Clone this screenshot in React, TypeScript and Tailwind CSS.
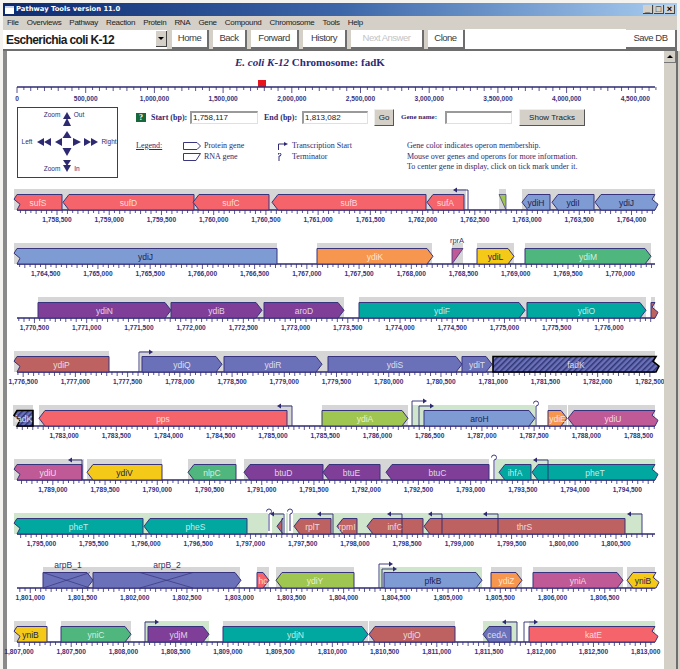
import type { ReactNode } from 'react';

type Side = 'l' | 'r';

interface Gene {
  name: string;
  x1: number;
  x2: number;
  color: string;
  /** Arrow tip side; omitted for a flat-ended fragment. */
  dir?: Side;
  /** The gene runs on past the end of the line. */
  notch?: Side;
  dark?: boolean;
  /** Label sits above the gene rather than inside it. */
  above?: boolean;
  cross?: [number, number];
  hatch?: boolean;
}

interface Promoter {
  x: number;
  to: number;
  rise?: number;
}

interface Track {
  bands: [number, number, string][];
  genes: Gene[];
  promoters?: Promoter[];
  terminators?: { x: number; from?: number }[];
}

const RED = '#f4646a';
const BLUE = '#7f9bd3';
const PURPLE = '#7f3f98';
const TEAL = '#00a8a0';
const ORANGE = '#f6964f';
const YELLOW = '#f5c917';
const GREEN = '#4fb67d';
const LIME = '#9fc650';
const PINK = '#bf5a96';
const BROWN = '#bd6161';
const PERI = '#6b71b8';

const NAVY = '#2e2a72';
const G = '#d6d6d6'; // gray operon band
const C = '#cfe6cd'; // green operon band

const BASE = 33;
const TOP = 17.5;
const LINE_BP = 6108;
const START_BP = 1758117;
const PX_PER_BP = 0.10445;

const TRACKS: Track[] = [
  {
    bands: [[14, 466, G], [499, 506, G], [522, 655, G]],
    genes: [
      { name: 'sufS', x1: 14, x2: 62, color: RED, notch: 'l' },
      { name: 'sufD', x1: 63, x2: 194, color: RED, dir: 'l' },
      { name: 'sufC', x1: 193, x2: 269, color: RED, dir: 'l' },
      { name: 'sufB', x1: 272, x2: 426, color: RED, dir: 'l' },
      { name: 'sufA', x1: 427, x2: 464, color: RED, dir: 'l' },
      { name: 'ydiH', x1: 522, x2: 550, color: BLUE, dir: 'l', dark: true },
      { name: 'ydiI', x1: 552, x2: 594, color: BLUE, dir: 'l', dark: true },
      { name: 'ydiJ', x1: 595, x2: 658, color: BLUE, dir: 'l', notch: 'r', dark: true },
    ],
    promoters: [{ x: 468, to: 453 }],
  },
  {
    bands: [[14, 277, G], [317, 432, G], [452, 463, G], [477, 514, G], [525, 651, G]],
    genes: [
      { name: 'ydiJ', x1: 14, x2: 277, color: BLUE, notch: 'l', dark: true },
      { name: 'ydiK', x1: 317, x2: 433, color: ORANGE, dir: 'r' },
      { name: 'ydiL', x1: 477, x2: 514, color: YELLOW, dir: 'r', dark: true },
      { name: 'ydiM', x1: 525, x2: 651, color: GREEN, dir: 'r' },
    ],
  },
  {
    bands: [[38, 344, G], [359, 646, G], [651, 655, G]],
    genes: [
      { name: 'ydiN', x1: 38, x2: 171, color: PURPLE, dir: 'r' },
      { name: 'ydiB', x1: 171, x2: 262, color: PURPLE, dir: 'r' },
      { name: 'aroD', x1: 264, x2: 344, color: PURPLE, dir: 'r' },
      { name: 'ydiF', x1: 359, x2: 525, color: TEAL, dir: 'r' },
      { name: 'ydiO', x1: 527, x2: 646, color: TEAL, dir: 'r' },
      { name: '', x1: 651, x2: 658, color: BROWN, notch: 'r' },
    ],
  },
  {
    bands: [[14, 109, G], [140, 655, G]],
    genes: [
      { name: 'ydiP', x1: 14, x2: 109, color: BROWN, notch: 'l' },
      { name: 'ydiQ', x1: 142, x2: 222, color: PERI, dir: 'r' },
      { name: 'ydiR', x1: 224, x2: 322, color: PERI, dir: 'r' },
      { name: 'ydiS', x1: 328, x2: 462, color: PERI, dir: 'r' },
      { name: 'ydiT', x1: 462, x2: 492, color: PERI, dir: 'r' },
      { name: 'fadK', x1: 493, x2: 659, color: PERI, notch: 'r', hatch: true },
    ],
    promoters: [{ x: 139, to: 153 }],
  },
  {
    bands: [[13, 33, G], [39, 292, G], [322, 408, G], [412, 535, C], [548, 567, G], [568, 655, G]],
    genes: [
      { name: 'fadK', x1: 14, x2: 33, color: PERI, notch: 'l', hatch: true },
      { name: 'pps', x1: 39, x2: 287, color: RED, dir: 'l' },
      { name: 'ydiA', x1: 322, x2: 408, color: LIME, dir: 'r' },
      { name: 'aroH', x1: 424, x2: 535, color: BLUE, dir: 'r', dark: true },
      { name: 'ydiE', x1: 548, x2: 567, color: ORANGE, dir: 'r' },
      { name: 'ydiU', x1: 568, x2: 658, color: PINK, dir: 'l', notch: 'r' },
    ],
    promoters: [{ x: 292, to: 277 }, { x: 412, to: 427, rise: 25 }, { x: 419, to: 434 }],
    terminators: [{ x: 536 }],
  },
  {
    bands: [[14, 84, G], [87, 162, G], [188, 236, G], [244, 489, G], [495, 655, C]],
    genes: [
      { name: 'ydiU', x1: 14, x2: 82, color: PINK, notch: 'l' },
      { name: 'ydiV', x1: 87, x2: 162, color: YELLOW, dir: 'l', dark: true },
      { name: 'nlpC', x1: 188, x2: 236, color: GREEN, dir: 'l' },
      { name: 'btuD', x1: 244, x2: 323, color: PURPLE, dir: 'l' },
      { name: 'btuE', x1: 323, x2: 380, color: PURPLE, dir: 'l' },
      { name: 'btuC', x1: 386, x2: 489, color: PURPLE, dir: 'l' },
      { name: 'ihfA', x1: 499, x2: 531, color: TEAL, dir: 'l' },
      { name: 'pheT', x1: 532, x2: 658, color: TEAL, dir: 'l', notch: 'r' },
    ],
    promoters: [{ x: 82, to: 68 }, { x: 548, to: 533 }],
    terminators: [{ x: 494 }],
  },
  {
    bands: [[14, 268, C], [272, 283, C], [286, 288, C], [293, 642, C]],
    genes: [
      { name: 'pheT', x1: 14, x2: 143, color: TEAL, notch: 'l' },
      { name: 'pheS', x1: 144, x2: 247, color: TEAL, dir: 'l' },
      { name: '', x1: 277, x2: 282, color: BROWN, dir: 'l' },
      { name: 'rplT', x1: 294, x2: 331, color: BROWN, dir: 'l' },
      { name: 'rpmI', x1: 337, x2: 357, color: BROWN, dir: 'l' },
      { name: 'infC', x1: 367, x2: 423, color: BROWN, dir: 'l' },
      { name: 'thrS', x1: 424, x2: 625, color: BROWN, dir: 'l' },
    ],
    promoters: [
      { x: 284, to: 270 }, { x: 333, to: 317 }, { x: 402, to: 387 },
      { x: 442, to: 428 }, { x: 498, to: 483 }, { x: 642, to: 627 },
    ],
    terminators: [{ x: 269, from: 3 }, { x: 290, from: 3 }],
  },
  {
    bands: [[43, 240, G], [257, 269, G], [276, 354, G], [380, 482, C], [491, 522, G], [533, 623, G], [627, 655, G]],
    genes: [
      { name: 'arpB_1', x1: 43, x2: 93, color: PERI, dir: 'r', above: true, cross: [43, 90] },
      { name: 'arpB_2', x1: 93, x2: 241, color: PERI, dir: 'r', above: true, cross: [140, 193] },
      { name: 'hc', x1: 257, x2: 269, color: RED, dir: 'r' },
      { name: 'ydiY', x1: 276, x2: 354, color: LIME, dir: 'l' },
      { name: 'pfkB', x1: 384, x2: 482, color: BLUE, dir: 'r', dark: true },
      { name: 'ydiZ', x1: 491, x2: 522, color: ORANGE, dir: 'r' },
      { name: 'yniA', x1: 533, x2: 623, color: PINK, dir: 'r' },
      { name: 'yniB', x1: 627, x2: 659, color: YELLOW, dir: 'l', notch: 'r', dark: true },
    ],
    promoters: [{ x: 379, to: 393, rise: 24 }, { x: 382, to: 397, rise: 19 }],
  },
  {
    bands: [[14, 46, G], [61, 131, G], [145, 209, C], [223, 368, G], [369, 455, G], [483, 517, C], [529, 655, C]],
    genes: [
      { name: 'yniB', x1: 14, x2: 47, color: YELLOW, notch: 'l', dark: true },
      { name: 'yniC', x1: 61, x2: 131, color: GREEN, dir: 'r' },
      { name: 'ydjM', x1: 148, x2: 209, color: PURPLE, dir: 'r' },
      { name: 'ydjN', x1: 223, x2: 368, color: TEAL, dir: 'r' },
      { name: 'ydjO', x1: 369, x2: 455, color: BROWN, dir: 'l' },
      { name: 'cedA', x1: 483, x2: 511, color: PERI, dir: 'l' },
      { name: 'katE', x1: 529, x2: 658, color: RED, dir: 'r', notch: 'r' },
    ],
    promoters: [{ x: 145, to: 159 }, { x: 517, to: 502 }, { x: 524, to: 538 }],
  },
];

const MENU = ['File', 'Overviews', 'Pathway', 'Reaction', 'Protein', 'RNA', 'Gene', 'Compound', 'Chromosome', 'Tools', 'Help'];

const NOTES = [
  'Gene color indicates operon membership.',
  'Mouse over genes and operons for more information.',
  'To center gene in display, click on tick mark under it.',
];

function genePoints(g: Gene): string {
  const pts: [number, number][] = [];
  const mid = (TOP + BASE) / 2;
  if (g.notch === 'l') {
    pts.push([g.x1 + 3, BASE], [g.x1 + 6, mid + 2], [g.x1, mid - 3], [g.x1 + 3, TOP]);
  } else if (g.dir === 'l') {
    pts.push([g.x1 + 6, BASE], [g.x1, mid], [g.x1 + 6, TOP]);
  } else {
    pts.push([g.x1, BASE], [g.x1, TOP]);
  }
  if (g.notch === 'r') {
    pts.push([g.x2 - 3, TOP], [g.x2 - 6, mid - 3], [g.x2, mid + 2], [g.x2 - 3, BASE]);
  } else if (g.dir === 'r') {
    pts.push([g.x2 - 6, TOP], [g.x2, mid], [g.x2 - 6, BASE]);
  } else {
    pts.push([g.x2, TOP], [g.x2, BASE]);
  }
  return pts.map((p) => p.join(',')).join(' ');
}

function Axis({ startBp }: { startBp: number }) {
  const ticks: ReactNode[] = [];
  const first = Math.ceil(startBp / 50) * 50;
  for (let bp = first; bp < startBp + LINE_BP; bp += 50) {
    const x = 17 + (bp - startBp) * PX_PER_BP;
    const major = bp % 500 === 0;
    ticks.push(
      <line key={bp} x1={x} x2={x} y1={BASE} y2={BASE + (major ? 5 : bp % 100 === 0 ? 4 : 3)} stroke={NAVY} strokeWidth={0.8} />
    );
    if (major) {
      ticks.push(
        <text key={`l${bp}`} x={x} y={BASE + 12} textAnchor="middle" fontSize={6.6} fontWeight={700} fill="#36327c" fontFamily="'Liberation Sans', sans-serif">
          {bp.toLocaleString('en-US')}
        </text>
      );
    }
  }
  return (
    <>
      <line x1={17} x2={655} y1={BASE} y2={BASE} stroke={NAVY} strokeWidth={1.6} />
      {ticks}
    </>
  );
}

function GeneShape({ gene }: { gene: Gene }) {
  const labelColor = gene.dark ? '#1d2350' : '#ffffff';
  const cx = (gene.x1 + gene.x2) / 2;
  return (
    <g>
      <polygon
        points={genePoints(gene)}
        fill={gene.hatch ? 'url(#hatch)' : gene.color}
        stroke={gene.hatch ? '#000' : '#37337c'}
        strokeWidth={gene.hatch ? 1.6 : 1}
      />
      {gene.cross && (
        <g stroke="#37337c" strokeWidth={0.7}>
          <line x1={gene.cross[0]} x2={gene.cross[1]} y1={TOP} y2={BASE} />
          <line x1={gene.cross[0]} x2={gene.cross[1]} y1={BASE} y2={TOP} />
        </g>
      )}
      {gene.name && (
        <text
          x={cx}
          y={gene.above ? TOP - 5 : TOP + 11}
          textAnchor="middle"
          fontSize={8.5}
          fill={gene.above ? '#33336a' : labelColor}
          fillOpacity={gene.dark || gene.above ? 1 : 0.78}
          fontFamily="'Liberation Sans', sans-serif"
        >
          {gene.name}
        </text>
      )}
    </g>
  );
}

function TrackRow({ track, index }: { track: Track; index: number }) {
  return (
    <svg viewBox="7 0 657 54" width={657} height={54} className="block overflow-visible">
      <defs>
        <pattern id="hatch" width={4} height={4} patternUnits="userSpaceOnUse" patternTransform="rotate(45)">
          <rect width={4} height={4} fill="#6b71b8" />
          <rect width={1.5} height={4} fill="#2f3472" />
        </pattern>
      </defs>
      {track.bands.map(([a, b, c]) => (
        <rect key={`${a}-${b}`} x={a} y={12} width={b - a} height={BASE - 12} fill={c} />
      ))}
      <Axis startBp={START_BP + LINE_BP * index} />
      {track.genes.map((g) => (
        <GeneShape key={`${g.name}-${g.x1}`} gene={g} />
      ))}
      {/* rprA is an RNA gene, so it gets the slanted shape instead of an arrow */}
      {index === 1 && (
        <g>
          <polygon points="452,17.5 463,17.5 452,33" fill={PINK} stroke="#37337c" strokeWidth={0.8} />
          <text x={457} y={12} textAnchor="middle" fontSize={7.5} fill="#33336a" fontFamily="'Liberation Sans', sans-serif">rprA</text>
        </g>
      )}
      {index === 0 && <polygon points="499,17.5 506,17.5 506,33" fill={LIME} stroke="#37337c" strokeWidth={0.7} />}
      {track.promoters?.map((p) => {
        const y = BASE - (p.rise ?? 20);
        const d = p.to > p.x ? -4 : 4;
        return (
          <g key={p.x}>
            <path d={`M${p.x} ${BASE}V${y}H${p.to + d}`} fill="none" stroke={NAVY} strokeWidth={0.9} />
            <polygon points={`${p.to},${y} ${p.to + d},${y - 2.5} ${p.to + d},${y + 2.5}`} fill={NAVY} />
          </g>
        );
      })}
      {track.terminators?.map((t) => (
        <path
          key={t.x}
          d={`M${t.x} ${BASE - (t.from ?? 0)}V${BASE - 20}a2.5 2.5 0 1 0 -2.5 -2.5`}
          fill="none"
          stroke="#3f3c86"
          strokeWidth={1}
        />
      ))}
    </svg>
  );
}

function OverviewRuler() {
  const ticks: ReactNode[] = [];
  for (let i = 0; i <= 93; i++) {
    const x = 17 + i * 6.87;
    const major = i % 10 === 0;
    ticks.push(<line key={i} x1={x} x2={x} y1={88} y2={major ? 94 : i % 2 === 0 ? 92 : 91} stroke={NAVY} strokeWidth={0.8} />);
    if (major) {
      ticks.push(
        <text key={`l${i}`} x={x} y={102} textAnchor="middle" fontSize={6.6} fontWeight={700} fill="#36327c" fontFamily="'Liberation Sans', sans-serif">
          {(i * 50000).toLocaleString('en-US')}
        </text>
      );
    }
  }
  return (
    <svg viewBox="7 76 657 30" width={657} height={30} className="block">
      <rect x={258} y={81} width={8} height={7} fill="#e8141c" />
      <line x1={17} x2={655} y1={88} y2={88} stroke={NAVY} strokeWidth={1.6} />
      {ticks}
    </svg>
  );
}

function ZoomPad() {
  const label = "'Liberation Sans', sans-serif";
  return (
    <svg viewBox="17 108 101 71" width={101} height={71} className="block shrink-0 mt-[2px]">
      <rect x={17.5} y={108.5} width={100} height={70} fill="white" stroke="#3a3680" />
      <g fill="#2e2a72">
        <polygon points="67,113 71,120 63,120" />
        <polygon points="67,119 71,127 63,127" />
        <polygon points="67,132 71.5,139 62.5,139" />
        <polygon points="67,157 71.5,149 62.5,149" />
        <polygon points="55,143 62,139 62,147" />
        <polygon points="81,143 73,139 73,147" />
        <polygon points="37,143 44,139 44,147" />
        <polygon points="44,143 51,139 51,147" />
        <polygon points="98,143 91,139 91,147" />
        <polygon points="91,143 84,139 84,147" />
        <polygon points="67,173 71,166 63,166" />
        <polygon points="67,167 71,161 63,161" />
      </g>
      <g fontSize={6.5} fontFamily={label} fill="#2e2a72" textAnchor="middle">
        <text x={52} y={118}>Zoom</text>
        <text x={79} y={118}>Out</text>
        <text x={27} y={145}>Left</text>
        <text x={109} y={145}>Right</text>
        <text x={52} y={172}>Zoom</text>
        <text x={77} y={172}>In</text>
      </g>
    </svg>
  );
}

function ToolButton({ label, width, disabled }: { label: string; width: string; disabled?: boolean }) {
  return (
    <div
      className={`${width} h-[19px] shrink-0 flex items-center justify-center bg-white border-r-2 border-b-2 border-[#6e6e6e] text-[9.5px] tracking-[-0.5px] ${
        disabled ? 'text-[#c4c4c4]' : 'text-[#3a3a3a]'
      }`}
    >
      {label}
    </div>
  );
}

function Field({ value, width }: { value?: string; width: string }) {
  return (
    <div className={`${width} h-[13px] shrink-0 bg-white border-l-2 border-t-2 border-[#9a9a9a] border-r border-b border-r-[#e0e0e0] border-b-[#e0e0e0] flex items-center pl-[1px] text-[8px] font-normal text-[#222] font-['Liberation_Sans',sans-serif]`}>
      {value}
    </div>
  );
}

function FormButton({ label, width }: { label: string; width: string }) {
  return (
    <div className={`${width} h-[17px] shrink-0 bg-[#d4d0c8] border border-[#eeeeea] border-r-[#555] border-b-[#555] flex items-center justify-center text-[8px] font-normal text-[#222] font-['Liberation_Sans',sans-serif]`}>
      {label}
    </div>
  );
}

export default function App() {
  return (
    <div className="w-[680px] h-[669px] overflow-hidden bg-[#f4f3f0] pt-[3px] pl-[3px] font-['Liberation_Sans',sans-serif]">
      <div className="w-[674px]">
        {/* title bar */}
        <div className="h-[13px] flex items-center bg-gradient-to-r from-[#0e2a70] via-[#3d66a8] to-[#a9cdf0]">
          <div className="ml-[2px] w-[9px] h-[8px] bg-white border-t-2 border-[#c8d4ee]" />
          <span className="ml-[2px] text-[6.8px] font-bold text-white font-['DejaVu_Sans',sans-serif]">
            Pathway Tools version 11.0
          </span>
          <div className="ml-auto mr-[2px] flex gap-[1px]">
            {['_', '□', '×'].map((c) => (
              <div key={c} className="w-[10px] h-[9px] bg-[#d4d0c8] flex items-center justify-center text-[9px] leading-none font-bold text-black border-r border-b border-[#444]">
                {c}
              </div>
            ))}
          </div>
        </div>
        {/* menu */}
        <div className="h-[13px] flex items-center gap-[8px] pl-[4px] bg-[#d4d0c8] text-[8px] tracking-[-0.3px] text-[#222]">
          {MENU.map((m) => (
            <span key={m}>{m}</span>
          ))}
        </div>
        {/* toolbar */}
        <div className="h-[22px] flex items-start pt-[1px] bg-[#d4d0c8] border-b-2 border-[#6e6e6e]">
          <div className="w-[164px] h-[19px] bg-white flex items-center pl-[3px] relative text-[12px] tracking-[-0.6px] leading-none font-bold text-[#1b1b1b] whitespace-nowrap">
            Escherichia coli K-12
            <div className="absolute right-0 top-[1px] w-[11px] h-[16px] bg-[#d4d0c8] border-r border-b border-[#444] flex items-center justify-center">
              <div className="w-0 h-0 border-l-[3px] border-r-[3px] border-t-[3px] border-l-transparent border-r-transparent border-t-black" />
            </div>
          </div>
          <div className="ml-[5px] flex gap-[4px]">
            <ToolButton label="Home" width="w-[37px]" />
            <ToolButton label="Back" width="w-[34px]" />
            <ToolButton label="Forward" width="w-[48px]" />
            <ToolButton label="History" width="w-[44px]" />
            <ToolButton label="Next Answer" width="w-[73px]" disabled />
            <ToolButton label="Clone" width="w-[37px]" />
          </div>
          <div className="flex-1 self-stretch -mt-[1px] bg-white" />
          <ToolButton label="Save DB" width="w-[51px]" />
        </div>
      </div>

      <div className="flex h-[620px]">
        {/* left frame */}
        <div className="w-[4px] shrink-0 bg-[#8a8a8a]" />
        <main className="w-[657px] shrink-0 bg-white">
          <div className="h-[24px] pl-[228px] pt-[4px] text-[11px] leading-[14px] font-bold text-[#2e2a72] font-['Liberation_Serif',serif] whitespace-nowrap">
            <i>E. coli K-12</i> Chromosome: fadK
          </div>
          <OverviewRuler />

          <div className="h-[72px] flex items-start pl-[10px]">
            <ZoomPad />
            <div className="ml-[18px] font-['Liberation_Serif',serif] text-[#2e2a72]">
              <div className="mt-[4px] h-[17px] flex items-center text-[8px] font-semibold whitespace-nowrap">
                <div className="w-[10px] h-[9px] bg-[#17683a] text-white text-[8px] font-bold flex items-center justify-center">?</div>
                <span className="ml-[5px] w-[39px]">Start (bp):</span>
                <Field value="1,758,117" width="w-[68px]" />
                <span className="ml-[6px] w-[38px]">End (bp):</span>
                <Field value="1,813,082" width="w-[66px]" />
                <div className="ml-[6px]"><FormButton label="Go" width="w-[20px]" /></div>
                <span className="ml-[7px] w-[44px] text-[7px] font-bold">Gene name:</span>
                <Field width="w-[67px]" />
                <div className="ml-[7px]"><FormButton label="Show Tracks" width="w-[66px]" /></div>
              </div>

              <div className="mt-[15px] flex text-[8px] leading-[10.5px]">
                <span className="w-[47px] underline">Legend:</span>
                <div className="w-[95px]">
                  <div className="flex items-center gap-[3px]">
                    <svg width={18} height={8} viewBox="0 0 18 8"><path d="M.5.5H14L17.5 4 14 7.5H.5Z" fill="none" stroke="#3a3680" /></svg>
                    <span>Protein gene</span>
                  </div>
                  <div className="flex items-center gap-[3px]">
                    <svg width={18} height={8} viewBox="0 0 18 8"><path d="M.5.5H17.5L13 7.5H.5Z" fill="none" stroke="#3a3680" /></svg>
                    <span>RNA gene</span>
                  </div>
                </div>
                <div className="w-[129px]">
                  <div className="flex items-center gap-[4px]">
                    <svg width={10} height={8} viewBox="0 0 10 8"><path d="M.5 8V2H7" fill="none" stroke="#2e2a72" /><path d="M6 0 10 2 6 4Z" fill="#2e2a72" /></svg>
                    <span>Transcription Start</span>
                  </div>
                  <div className="flex items-center gap-[4px]">
                    <svg width={10} height={8} viewBox="0 0 10 8"><path d="M1 8V3a1.5 1.5 0 1 0-1-1" fill="none" stroke="#2e2a72" /></svg>
                    <span>Terminator</span>
                  </div>
                </div>
                <div className="whitespace-nowrap">
                  {NOTES.map((n) => (
                    <div key={n}>{n}</div>
                  ))}
                </div>
              </div>
            </div>
          </div>

          {TRACKS.map((t, i) => (
            <TrackRow key={i} track={t} index={i} />
          ))}
        </main>

        {/* scrollbar */}
        <div className="w-[12px] shrink-0 bg-[#d4d0c8]">
          <div className="h-[12px] bg-[#d4d0c8] border-r border-b border-[#777] flex items-center justify-center">
            <div className="w-0 h-0 border-l-[3px] border-r-[3px] border-b-[3px] border-l-transparent border-r-transparent border-b-black" />
          </div>
        </div>
        <div className="w-[2px] shrink-0 bg-[#6e6e6e]" />
        <div className="w-[2px] shrink-0 bg-[#d4d0c8]" />
      </div>
    </div>
  );
}
